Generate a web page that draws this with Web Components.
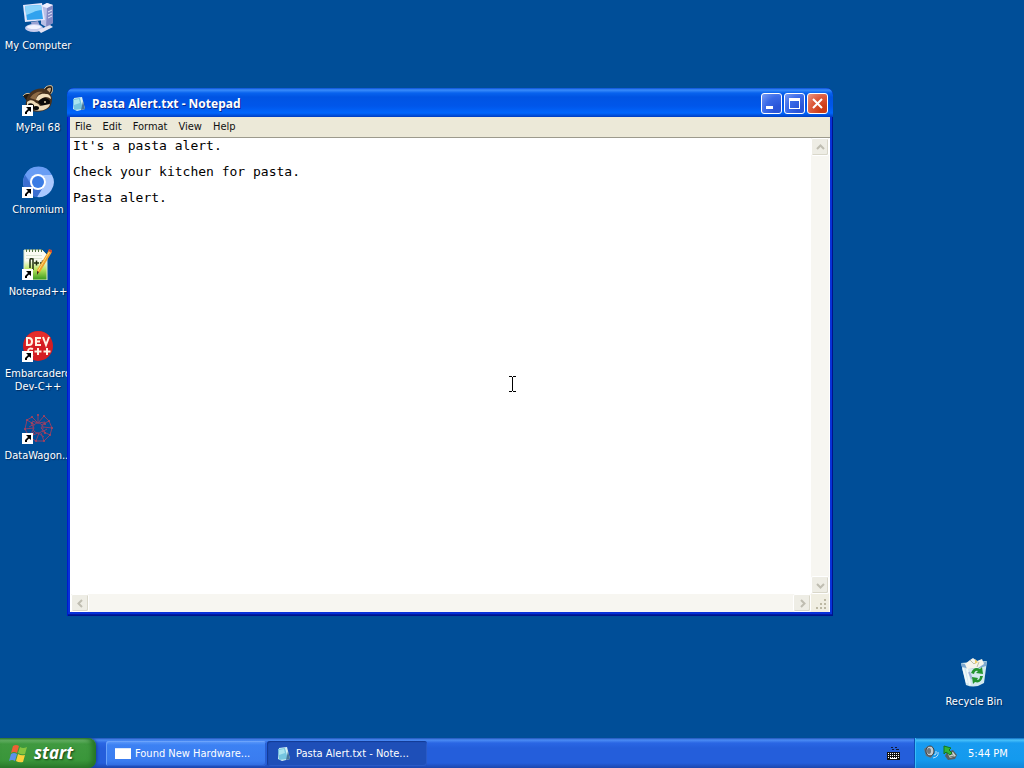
<!DOCTYPE html>
<html lang="en">
<head>
<meta charset="utf-8">
<title>Desktop</title>
<style>
  body {
    margin: 0;
    height: 100vh;
    overflow: hidden;
    background: #004e98;
    font: 11px/13px "DejaVu Sans Condensed", "Noto Sans", sans-serif;
  }
</style>
</head>
<body>

<xp-desktop>
  <desktop-icon label="My Computer">
    <svg viewBox="0 0 32 32" width="32" height="32">
      <path d="M19 4l6-3 6 2v18l-7 4-5-3z" fill="#b9bfe6"/>
      <path d="M25 6l6-3v18l-7 4z" fill="#8289c4"/>
      <path d="M19 4l6-3 6 2-6 3z" fill="#eef0ff"/>
      <path d="M26 10l4-2M26 13l4-2M26 16l4-2" stroke="#e4e7fb"/>
      <path d="M1 3l19-2 3 17-20 2z" fill="#e4e7fb"/>
      <path d="M3 4l16-1 2 14-16 1z" fill="#31a2ee"/>
      <path d="M3 4l16-1 1 5C13 8 9 12 4 13z" fill="#8ad4fc"/>
      <path d="M9 20l7-1 2 5-8 1z" fill="#9aa2d2"/>
      <ellipse cx="12" cy="26" rx="9" ry="4" fill="#c7cced"/>
      <ellipse cx="12" cy="25" rx="7" ry="2" fill="#f3f4ff"/>
      <path d="M16 28l12-5 3 2-12 6z" fill="#e3e2f3"/>
    </svg>
  </desktop-icon>

  <desktop-icon label="MyPal 68" shortcut>
    <svg viewBox="0 0 32 32" width="32" height="32">
      <path d="M22 7c0-5 6-6 8-5 1 3 1 7-3 9z" fill="#221910"/>
      <path d="M22 7c0-5 6-6 8-5 1 3 1 7-3 9" fill="none" stroke="#d9c19a"/>
      <path d="M24 7c1-3 3-4 5-3 0 3-1 5-3 6z" fill="#c9a77c"/>
      <path d="M1 12c2-3 6-3 8-2L5 17z" fill="#221910"/>
      <path d="M1 12c2-3 6-3 8-2" fill="none" stroke="#d9c19a"/>
      <path d="M4 18C5 8 14 3 23 5c7 3 9 11 5 18-5 5-15 6-21 3-3-2-4-5-3-8z" fill="#47321f"/>
      <path d="M8 14c4-6 9-7 13-6-4 1-7 4-7 8z" fill="#8c6a45"/>
      <path d="M14 16c1-5 5-7 10-6 3 0 5 2 5 5-4-3-8-3-11 2z" fill="#f2dfbd"/>
      <path d="M16 18c3-5 9-5 12-1 0 4-4 6-8 5z" fill="#0c0a08"/>
      <path d="M5 18c3-3 7-2 9 1l-3 4-6-1z" fill="#eedbb9"/>
      <path d="M6 20c3-2 6 0 7 3l-5 2z" fill="#0c0a08"/>
      <path d="M12 19c2-1 5 1 6 3l10-2c-1 5-8 8-16 6z" fill="#eedbb9"/>
      <ellipse cx="14" cy="24" rx="3" ry="2" fill="#090909"/>
      <circle cx="23" cy="18" r="1" fill="#dfcfa6"/>
    </svg>
  </desktop-icon>

  <desktop-icon label="Chromium" shortcut>
    <svg viewBox="0 0 32 32" width="32" height="32">
      <circle cx="16" cy="16" r="15" fill="#5a8fee"/>
      <path d="M3 9A15 15 0 0 1 30 9H16a7 7 0 0 0-7 7z" fill="#699df4"/>
      <path d="M30 9a15 15 0 0 1-15 22l7-11a7 7 0 0 0-2-11z" fill="#aac8ff"/>
      <path d="M3 9a15 15 0 0 0 12 22l6-10a7 7 0 0 1-11-1z" fill="#3c6fd0"/>
      <circle cx="16" cy="16" r="8" fill="#fff"/>
      <circle cx="16" cy="16" r="6" fill="#3b7ce4"/>
    </svg>
  </desktop-icon>

  <desktop-icon label="Notepad++" shortcut>
    <svg viewBox="0 0 32 32" width="32" height="32">
      <defs>
        <linearGradient id="npp" x2="0" y2="1">
          <stop offset=".35" stop-color="#fafcf3"/>
          <stop offset=".65" stop-color="#b9e45c"/>
          <stop offset="1" stop-color="#35981d"/>
        </linearGradient>
      </defs>
      <path d="M2 2h18l5 5v25H2z" fill="url(#npp)" stroke="#dce8cd"/>
      <path d="M4.500 1v3M7.500 1v3M10.500 1v3M13.500 1v3M16.500 1v3M19.500 1v3" stroke="#547546"/>
      <path d="M4 7.500h16M4 10.500h16" stroke="#dbe6d3"/>
      <path d="M8 20v-8q0-2 3-1v11M12 15h5M14.500 12.500v5M18 15h5M20.500 12.500v5" fill="none" stroke="#1e2c11" stroke-width="1.500"/>
      <path d="M27 2l3 2-12 20-3 2v-4z" fill="#efa22c"/>
      <path d="M28 3L16 23" stroke="#ffd878"/>
      <path d="M26 3l1-2 3 1v3z" fill="#ca4a34"/>
      <path d="M15 23l2 1-2 3z" fill="#3a3020"/>
    </svg>
  </desktop-icon>

  <desktop-icon label="Embarcadero Dev-C++" shortcut>
    <svg viewBox="0 0 32 32" width="32" height="32">
      <circle cx="16" cy="16" r="15" fill="#d51d22"/>
      <path d="M4 8A15 15 0 0 1 29 8L3 16z" fill="#e42d2c"/>
      <g fill="none" stroke="#fff3e4" stroke-width="2">
        <path d="M5 8v7h2q3 0 3-3.500t-3-3.500zM19 8h-5v7h5M14 11.500h4M21 7l3 8 3-8"/>
        <path d="M11 19q-5-2-5 3t5 3M16 18v7M12.500 21.500h7M25 18v7M21.500 21.500h7"/>
      </g>
    </svg>
  </desktop-icon>

  <desktop-icon label="DataWagon..." shortcut>
    <svg viewBox="0 0 32 32" width="32" height="32">
      <g fill="none" stroke="#8b3f69">
        <path d="M16 2v9l-6-6M16 11l6-7M22 4l5 5-8 4M27 9l3 7-9-1M30 16l-2 7-8-4M28 23l-6 6-3-8M22 29h-8l3-8M14 29l-7-4 6-6M7 25l-4-8 9-1M3 17l2-9 8 5M5 8l5-3"/>
        <circle cx="16" cy="16" r="5"/>
        <path d="M9 11l3 5-3 6M23 10l-4 6 5 5M11 23l5-2 6 4M10 9l6 2 7-1M7 15l5-3M25 17l-5 3"/>
      </g>
      <g fill="#b14358">
        <circle cx="16" cy="3" r="1"/><circle cx="10" cy="5" r="1"/><circle cx="22" cy="4" r="1"/>
        <circle cx="27" cy="9" r="1"/><circle cx="30" cy="16" r="1"/><circle cx="28" cy="23" r="1"/>
        <circle cx="22" cy="29" r="1"/><circle cx="14" cy="29" r="1"/><circle cx="7" cy="25" r="1"/>
        <circle cx="3" cy="17" r="1"/><circle cx="5" cy="8" r="1"/><circle cx="23" cy="12" r="1"/>
        <circle cx="10" cy="11" r="1"/><circle cx="23" cy="21" r="1"/><circle cx="11" cy="22" r="1"/>
      </g>
    </svg>
  </desktop-icon>

  <desktop-icon slot="bin" label="Recycle Bin">
    <svg viewBox="0 0 32 32" width="32" height="32">
      <path d="M3 5l26-2-3 22q-9 6-18 2z" fill="#d3e9ef"/>
      <path d="M3 5q12 5 26-2l-1 5q-12 5-24 1z" fill="#7fa9cf"/>
      <path d="M7 6l5-4 3-2 4 3 5-2 2 5-6 4-11 1z" fill="#f6f4ec"/>
      <path d="M12 2l4 4 3-3M21 4l-2 5" fill="none" stroke="#bcbda9"/>
      <path d="M17 1l3 3-3 2z" fill="#efcf70"/>
      <path d="M5 10l4 15M9 11l3 16" stroke="#fff" stroke-width="2" opacity=".7"/>
      <path d="M11 14l3 7" stroke="#a2b3d8" stroke-width="2"/>
      <g fill="#23942f">
        <path d="M13 15q3-7 9-4l2-2 1 7-7-1 2-2q-3-1-4 3z"/>
        <path d="M25 18q-2 8-8 6l-2 2-1-7 6 1-1 2q3 0 3-4z"/>
      </g>
    </svg>
  </desktop-icon>

  <notepad-window slot="window" caption="Pasta Alert.txt - Notepad">It's a pasta alert.

Check your kitchen for pasta.

Pasta alert.</notepad-window>
</xp-desktop>

<xp-taskbar clock="5:44 PM">
  <task-button label="Found New Hardware...">
    <svg viewBox="0 0 16 16" width="16" height="16">
      <path d="M0 2h16v11H0z" fill="#fff"/>
      <path d="M0 2h16v1H0z" fill="#dce9fb"/>
    </svg>
  </task-button>
  <task-button label="Pasta Alert.txt - Note..." active>
    <svg viewBox="0 0 16 16" width="16" height="16">
      <path d="M3 2l8-1 3 12-8 2-4-2z" fill="#d6f1f5"/>
      <path d="M2 3l7-1 3 11-9 1z" fill="#75c5df"/>
      <path d="M3 4l5-1 1 4-6 2z" fill="#a9e4ef"/>
      <path d="M12 5l2 8-4 1z" fill="#49769b"/>
    </svg>
  </task-button>
</xp-taskbar>

<i-beam></i-beam>

<script>
const makeTemplate = html => {
  const template = document.createElement('template')
  template.innerHTML = html
  return template
}

class BaseElement extends HTMLElement {
  constructor () {
    super()

    this.attachShadow({ mode: 'open' })
    this.shadowRoot.appendChild(this.constructor.template.content.cloneNode(true))
  }

  $ (selector) {
    return this.shadowRoot.querySelector(selector)
  }
}

class XpDesktop extends BaseElement {
  static template = makeTemplate(`
    <style>
      :host {
        display: block;
        position: relative;
        height: calc(100vh - 30px);
        overflow: hidden;
      }
      .icons {
        display: grid;
        grid-template-columns: 76px;
        grid-auto-rows: 82px;
        padding-top: 2px;
      }
      .bin {
        position: absolute;
        right: 12px;
        bottom: 30px;
        width: 76px;
      }
      /* windows float over the icons */
      .window {
        position: absolute;
        inset: 88px 191px 122px 67px;
        display: grid;
      }
    </style>

    <div class="icons"><slot></slot></div>
    <div class="bin"><slot name="bin"></slot></div>
    <div class="window"><slot name="window"></slot></div>
  `)
}

class DesktopIcon extends BaseElement {
  static template = makeTemplate(`
    <style>
      :host {
        display: block;
        color: #fff;
        text-align: center;
      }
      a {
        display: grid;
        justify-items: center;
        gap: 5px;
        color: inherit;
        text-decoration: none;
        text-shadow: 1px 1px 1px #002a5c;
      }
      .picture {
        position: relative;
        width: 32px;
        height: 32px;
      }
      .arrow {
        display: none;
        position: absolute;
        left: 0;
        bottom: 0;
      }
      :host([shortcut]) .arrow {
        display: block;
      }
    </style>

    <a href="#">
      <span class="picture">
        <slot></slot>
        <svg class="arrow" viewBox="0 0 11 11" width="11" height="11">
          <path d="M0 0h11v11H0z" fill="#fff"/>
          <path d="M4 2h5v5L7 5.500 5 7.500V9H3V7l3-3z" fill="#000"/>
        </svg>
      </span>
      <span id="label"></span>
    </a>
  `)

  connectedCallback () {
    this.$('#label').textContent = this.getAttribute('label')
  }
}

class ScrollBar extends BaseElement {
  static template = makeTemplate(`
    <style>
      :host {
        display: flex;
        justify-content: space-between;
        background: #f7f6f1;
      }
      :host([vertical]) {
        flex-direction: column;
      }
      button {
        display: grid;
        place-items: center;
        box-sizing: border-box;
        width: 18px;
        height: 18px;
        padding: 0;
        border: 1px solid #fff;
        border-radius: 2px;
        background: #eeede5;
        box-shadow: inset -1px -1px #d9d7ca;
      }
      path {
        fill: none;
        stroke: #bfbdb1;
        stroke-width: 2;
      }
      :host([vertical]) svg {
        transform: rotate(90deg);
      }
    </style>

    <button aria-label="Scroll back" disabled>
      <svg viewBox="0 0 9 9" width="9" height="9"><path d="M6 1L2.500 4.500 6 8"/></svg>
    </button>
    <button aria-label="Scroll forward" disabled>
      <svg viewBox="0 0 9 9" width="9" height="9"><path d="M3 1l3.500 3.500L3 8"/></svg>
    </button>
  `)
}

class NotepadWindow extends BaseElement {
  static template = makeTemplate(`
    <style>
      :host {
        display: flex;
        flex-direction: column;
        box-sizing: border-box;
        padding: 0 3px 4px;
        border-radius: 7px 7px 0 0;
        background: #0831d9;
        box-shadow: inset 1px 0 #0019cf, inset -1px -1px #00138c, inset 0 -2px #001ea0;
      }
      header {
        display: flex;
        align-items: center;
        gap: 5px;
        height: 29px;
        margin: 0 -3px;
        padding: 2px 5px 0 4px;
        box-sizing: border-box;
        border-radius: 7px 7px 0 0;
        color: #fff;
        background: linear-gradient(#0a4fd8 0, #3a8dfb 2px, #0863ee 5px, #0054e3 9px, #0056ea 18px, #0066fd 25px, #0048d0 28px, #003cc0 29px);
      }
      h1 {
        flex: 1;
        margin: 0;
        font: 700 12px/16px "Noto Sans", sans-serif;
        text-shadow: 1px 1px #0a2a90;
      }
      .buttons {
        display: flex;
        gap: 2px;
      }
      .buttons button {
        width: 21px;
        height: 21px;
        padding: 0;
        border: 1px solid #fff;
        border-radius: 3px;
        background: radial-gradient(circle at 90% 90%, #2a55d8 20%, #3a6ae8 60%, #7b9ef4);
      }
      .buttons .close {
        background: radial-gradient(circle at 90% 90%, #cc3c16 20%, #dd5a3c 60%, #eb9a86);
      }
      .buttons svg {
        display: block;
      }
      nav {
        display: flex;
        align-items: flex-start;
        gap: 11px;
        height: 21px;
        padding: 3px 0 0 5px;
        box-sizing: border-box;
        border-bottom: 1px solid #9c9a8c;
        background: #ece9d8;
      }
      nav button {
        padding: 0;
        border: 0;
        background: none;
        color: #111;
        font: inherit;
      }
      main {
        flex: 1;
        display: grid;
        grid-template-columns: 1fr 18px;
        grid-template-rows: 1fr 18px;
        padding: 0 1px;
        background: #fff;
      }
      textarea {
        margin: 0;
        padding: 1px 2px;
        border: 0;
        outline: 0;
        resize: none;
        overflow: hidden;
        background: #fff;
        color: #000;
        font: 13px/13px "DejaVu Sans Mono", monospace;
      }
      .grip {
        background: #f0eee2;
      }
    </style>

    <header>
      <svg viewBox="0 0 16 16" width="16" height="16">
        <path d="M3 2l8-1 3 12-8 2-4-2z" fill="#d6f1f5"/>
        <path d="M2 3l7-1 3 11-9 1z" fill="#75c5df"/>
        <path d="M3 4l5-1 1 4-6 2z" fill="#a9e4ef"/>
        <path d="M12 5l2 8-4 1z" fill="#49769b"/>
      </svg>
      <h1></h1>
      <div class="buttons">
        <button aria-label="Minimize">
          <svg viewBox="0 0 19 19" width="19" height="19"><path d="M4 12h7v3H4z" fill="#fff"/></svg>
        </button>
        <button aria-label="Maximize">
          <svg viewBox="0 0 19 19" width="19" height="19"><path d="M4 4h11v11H4zM5 7v7h9V7z" fill="#fff" fill-rule="evenodd"/></svg>
        </button>
        <button class="close" aria-label="Close">
          <svg viewBox="0 0 19 19" width="19" height="19"><path d="M5 5l9 9M14 5l-9 9" stroke="#fff" stroke-width="2"/></svg>
        </button>
      </div>
    </header>
    <nav>
      <button>File</button>
      <button>Edit</button>
      <button>Format</button>
      <button>View</button>
      <button>Help</button>
    </nav>
    <main>
      <textarea aria-label="Document" spellcheck="false" wrap="off"></textarea>
      <scroll-bar vertical></scroll-bar>
      <scroll-bar></scroll-bar>
      <svg class="grip" viewBox="0 0 18 18" width="18" height="18">
        <path d="M13 5h2v2h-2zM9 9h2v2H9zM13 9h2v2h-2zM5 13h2v2H5zM9 13h2v2H9zM13 13h2v2h-2z" fill="#bcb8a4"/>
      </svg>
    </main>
  `)

  connectedCallback () {
    this.$('h1').textContent = this.getAttribute('caption')
    this.$('textarea').value = this.textContent
  }
}

class TaskButton extends BaseElement {
  static template = makeTemplate(`
    <style>
      :host {
        display: block;
        flex: 0 1 160px;
      }
      button {
        display: flex;
        align-items: center;
        gap: 4px;
        box-sizing: border-box;
        width: 100%;
        height: 25px;
        padding: 0 9px;
        border: 0;
        border-radius: 3px;
        color: #fff;
        font: inherit;
        white-space: nowrap;
        background: linear-gradient(#5e9bfc, #3c81f3 4px, #3a7cf0 20px, #2f6be0);
        box-shadow: inset 1px 1px #6ba3fb, inset -1px -1px #2a5fd0;
      }
      :host([active]) button {
        background: #1e4fb8;
        box-shadow: inset 1px 1px 1px #123a94, inset -1px -1px #2a5ac6;
      }
    </style>

    <button><slot></slot><span id="label"></span></button>
  `)

  connectedCallback () {
    this.$('#label').textContent = this.getAttribute('label')
  }
}

class XpTaskbar extends BaseElement {
  static template = makeTemplate(`
    <style>
      :host {
        display: flex;
        height: 30px;
        color: #fff;
        background: linear-gradient(#1f53b8 0, #4b8cf4 2px, #2a66e4 5px, #245edb 10px, #245edb 25px, #1c46ad 30px);
      }
      .start {
        display: flex;
        align-items: center;
        gap: 5px;
        width: 96px;
        padding: 0 0 1px 9px;
        border: 0;
        border-radius: 0 8px 8px 0;
        color: #fff;
        font: italic 700 17px/20px "Open Sans", "Noto Sans", sans-serif;
        text-shadow: 1px 1px 2px #123f12;
        background: linear-gradient(#2d7a2d 0, #6bb56b 2px, #3f993f 6px, #3a963a 22px, #2c7a2c 30px);
        box-shadow: inset -4px 0 5px #267526, 1px 0 3px #173f9c;
      }
      .tasks {
        flex: 1;
        display: flex;
        gap: 1px;
        padding: 3px 0 0 10px;
      }
      .keyboard {
        align-self: center;
        margin-right: 13px;
      }
      .tray {
        display: flex;
        align-items: center;
        gap: 3px;
        box-sizing: border-box;
        width: 110px;
        padding-left: 8px;
        border-left: 1px solid #0d4fb5;
        background: linear-gradient(#0c68c0 0, #4ac2fa 2px, #189bf0 5px, #139aee 22px, #1186d8 30px);
        box-shadow: inset 1px 0 #38bdf8;
      }
      time {
        margin-left: 7px;
        white-space: nowrap;
      }
    </style>

    <button class="start">
      <svg viewBox="0 0 20 20" width="20" height="20">
        <path d="M4 3q3-2 6 0L8 10q-3-2-6 0z" fill="#ee6135"/>
        <path d="M11 4q3 2 7 0l-2 7q-3 1-7-1z" fill="#85c440"/>
        <path d="M2 11q3-2 6 0l-2 7q-3-2-6 0z" fill="#5b91ec"/>
        <path d="M9 11q3 2 7 1l-2 7q-4 1-7-1z" fill="#fbd03b"/>
      </svg>
      start
    </button>
    <div class="tasks"><slot></slot></div>
    <svg class="keyboard" viewBox="0 0 14 14" width="14" height="14">
      <path d="M4 1.500h2M8 1.500h2M5 3.500h2M9 3.500h3" stroke="#111b36"/>
      <path d="M0 6h13v8H0z" fill="#111"/>
      <path d="M1 7.500h11M1 9.500h11M1 11.500h11" stroke="#fff" stroke-dasharray="1"/>
      <path d="M3 12.500h7" stroke="#fff"/>
    </svg>
    <div class="tray">
      <svg viewBox="0 0 16 16" width="16" height="16">
        <path d="M1 4l4-3h4l2 6-3 6-5-2z" fill="#69757c"/>
        <ellipse cx="7" cy="6" rx="4" ry="5" fill="#c7cdcf" stroke="#343c43"/>
        <ellipse cx="6" cy="6" rx="2" ry="3" fill="#6f777c"/>
        <path d="M11 10q3 0 2-4M10 13q6-1 5-6" fill="none" stroke="#b9def7"/>
      </svg>
      <svg viewBox="0 0 16 16" width="16" height="16">
        <path d="M5 7l6-2 4 5-2 4-7 1-3-4z" fill="#566063"/>
        <path d="M6 9l5-2 3 4-6 2z" fill="#cbd6cf"/>
        <path d="M7 10l4-1M8 12l4-1" stroke="#6c7774"/>
        <path d="M2 1l7 2-2 2 3 3-2 2-4-3-2 2z" fill="#32b63a" stroke="#14771e"/>
      </svg>
      <time></time>
    </div>
  `)

  connectedCallback () {
    this.$('time').textContent = this.getAttribute('clock')
  }
}

class IBeam extends BaseElement {
  static template = makeTemplate(`
    <style>
      :host {
        position: absolute;
        left: 509px;
        top: 376px;
        pointer-events: none;
      }
      svg {
        display: block;
      }
    </style>

    <svg viewBox="0 0 7 16" width="7" height="16">
      <path d="M0 0h3v1h1V0h3v1H4v14h3v1H4v-1H3v1H0v-1h3V1H0z" fill="#000"/>
    </svg>
  `)
}

window.customElements.define('xp-desktop', XpDesktop)
window.customElements.define('desktop-icon', DesktopIcon)
window.customElements.define('scroll-bar', ScrollBar)
window.customElements.define('notepad-window', NotepadWindow)
window.customElements.define('task-button', TaskButton)
window.customElements.define('xp-taskbar', XpTaskbar)
window.customElements.define('i-beam', IBeam)
</script>
</body>
</html>
